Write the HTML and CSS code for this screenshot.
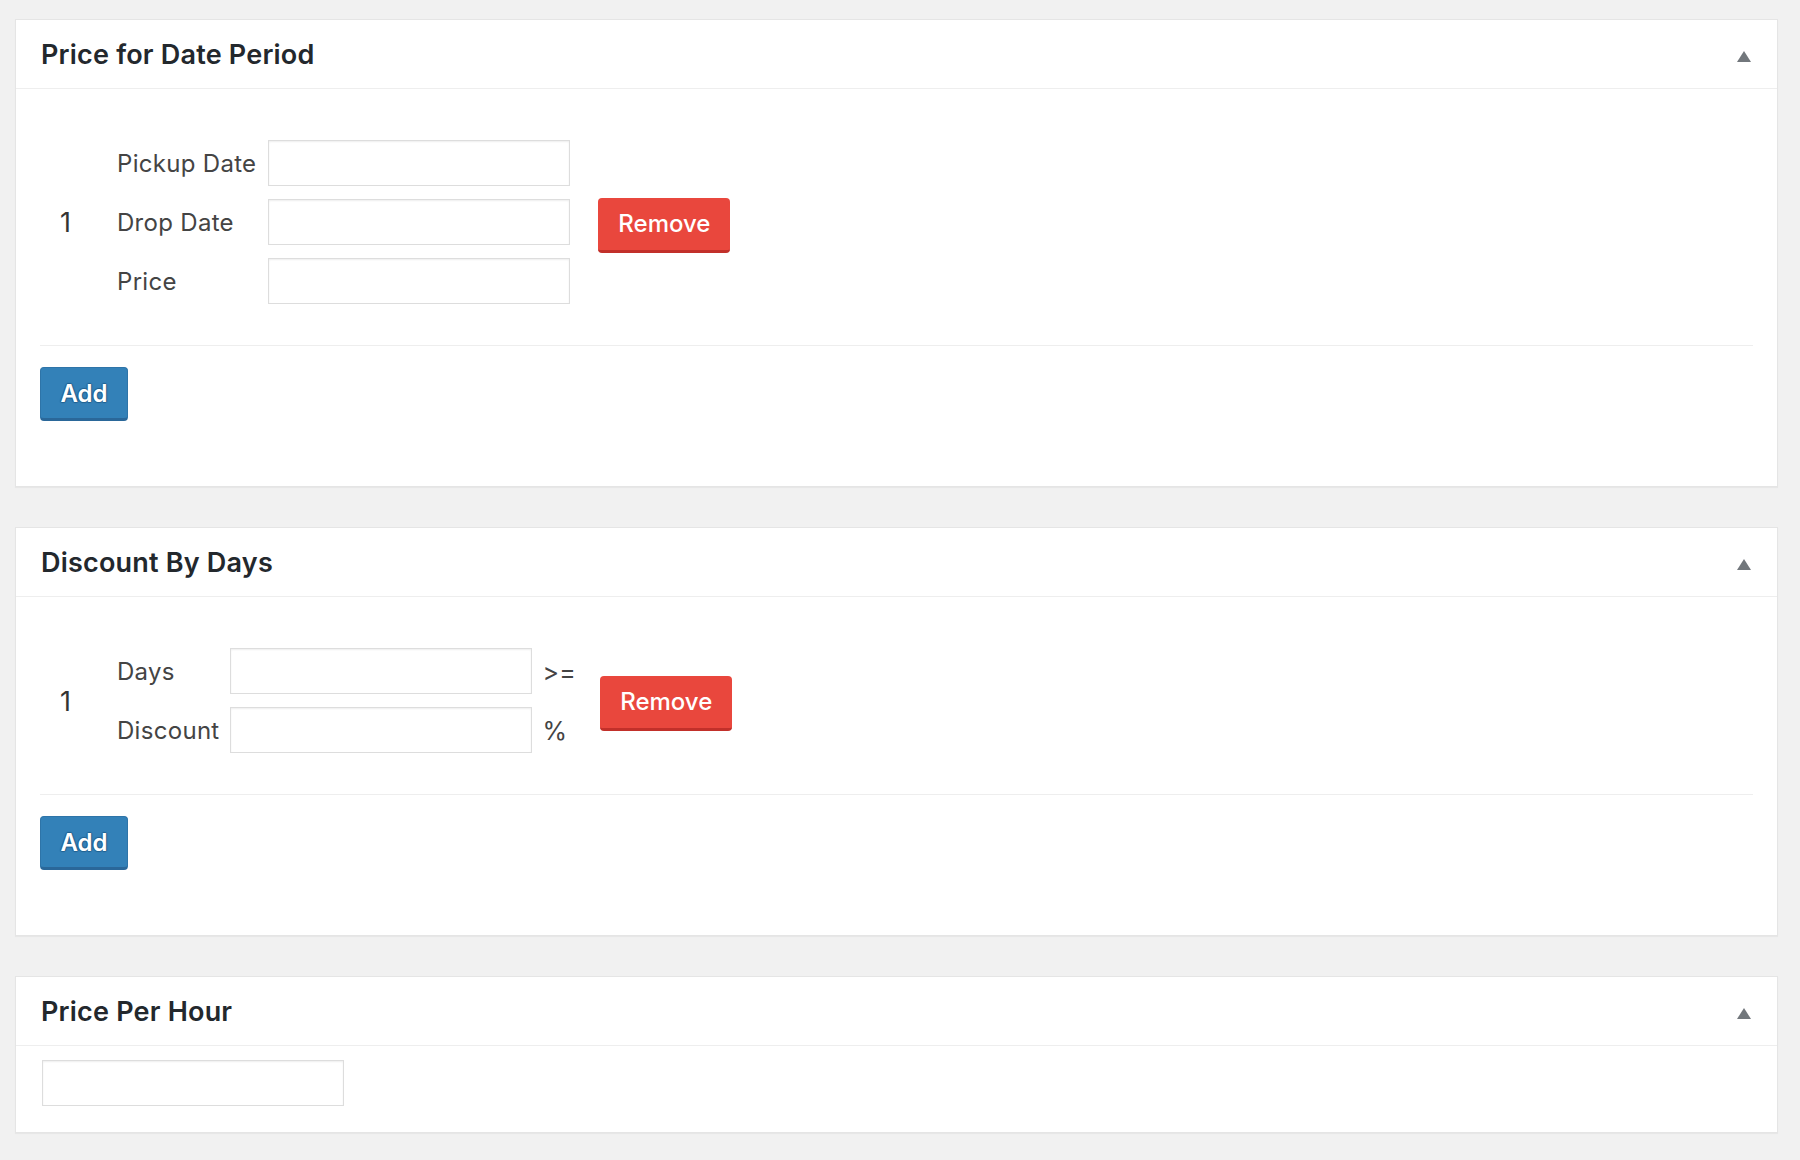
FILE: index.html
```html
<!DOCTYPE html>
<html>
<head>
    <link rel="stylesheet" href="styles.css">
</head>
<body>
    <div class="postbox">
        <div class="postbox-header">
            <h2>Price for Date Period</h2>
            <span class="toggle-arrow"></span>
        </div>
        <div class="inside">
            <table class="repeat-table">
                <tr>
                    <td class="row-num" rowspan="3">1</td>
                    <td class="row-label">Pickup Date</td>
                    <td class="row-input"><input type="text"></td>
                    <td class="row-action" rowspan="3"><button class="btn btn-remove">Remove</button></td>
                </tr>
                <tr>
                    <td class="row-label">Drop Date</td>
                    <td class="row-input"><input type="text"></td>
                </tr>
                <tr>
                    <td class="row-label">Price</td>
                    <td class="row-input"><input type="text"></td>
                </tr>
            </table>
            <div class="separator"></div>
            <button class="btn btn-add">Add</button>
        </div>
    </div>

    <div class="postbox">
        <div class="postbox-header">
            <h2>Discount By Days</h2>
            <span class="toggle-arrow"></span>
        </div>
        <div class="inside">
            <table class="repeat-table">
                <tr>
                    <td class="row-num" rowspan="2">1</td>
                    <td class="row-label tight">Days</td>
                    <td class="row-input"><input type="text"></td>
                    <td class="row-unit">&gt;=</td>
                    <td class="row-action narrow" rowspan="2"><button class="btn btn-remove">Remove</button></td>
                </tr>
                <tr>
                    <td class="row-label tight">Discount</td>
                    <td class="row-input"><input type="text"></td>
                    <td class="row-unit">%</td>
                </tr>
            </table>
            <div class="separator"></div>
            <button class="btn btn-add">Add</button>
        </div>
    </div>

    <div class="postbox">
        <div class="postbox-header">
            <h2>Price Per Hour</h2>
            <span class="toggle-arrow"></span>
        </div>
        <div class="inside inside-simple">
            <input type="text">
        </div>
    </div>
</body>
</html>
```

FILE: styles.css
```css
body {
    font-family: Inter, Roboto, "Liberation Sans", Arial, sans-serif;
    background-color: #f1f1f1;
    margin: 0;
    padding: 19px 22px 0 15px;
    color: #444;
}
.postbox {
    background-color: white;
    border: 1px solid #e5e5e5;
    box-shadow: 0 1px 1px rgba(0,0,0,0.04);
    margin-bottom: 40px;
}
.postbox-header {
    display: flex;
    align-items: center;
    justify-content: space-between;
    height: 68px;
    padding: 0 26px 0 25px;
    border-bottom: 1px solid #eee;
}
.postbox-header h2 {
    margin: 0;
    font-size: 27px;
    font-weight: 600;
    letter-spacing: 0.2px;
    color: #23282d;
}
.toggle-arrow {
    width: 0;
    height: 0;
    margin-top: 5px;
    border-left: 7.5px solid transparent;
    border-right: 7.5px solid transparent;
    border-bottom: 11px solid #72777c;
}
.inside {
    padding: 45px 24px 65px 24px;
}
.inside-simple {
    padding: 14px 26px 26px 26px;
}
.repeat-table {
    border-collapse: collapse;
}
.repeat-table td {
    padding: 0;
    vertical-align: middle;
    font-size: 24px;
    letter-spacing: 0.3px;
}
.row-num {
    width: 57px;
    padding-left: 20px !important;
    font-size: 27px !important;
    color: #333;
}
.row-label {
    padding-right: 12px !important;
    white-space: nowrap;
}
.row-label.tight {
    padding-right: 10px !important;
}
.row-input {
    padding: 6px 0 7px 0 !important;
}
.row-unit {
    padding-left: 11px !important;
    font-size: 25px !important;
}
.row-action {
    padding: 5px 0 0 28px !important;
}
.row-action.narrow {
    padding: 4px 0 0 24px !important;
}
input[type="text"] {
    display: block;
    width: 302px;
    height: 46px;
    box-sizing: border-box;
    margin: 0;
    border: 1px solid #ddd;
    box-shadow: inset 0 1px 2px rgba(0,0,0,0.07);
    background-color: white;
}
.separator {
    border-top: 1px solid #eee;
    margin-top: 34px;
    margin-bottom: 21px;
}
.btn {
    display: block;
    border: none;
    border-radius: 4px;
    color: white;
    font-family: Inter, Roboto, "Liberation Sans", Arial, sans-serif;
    font-weight: 500;
    font-size: 24px;
    cursor: pointer;
}
.btn-remove {
    width: 132px;
    height: 55px;
    background-color: #e9473d;
    border-bottom: 3px solid #c2302a;
}
.btn-add {
    width: 88px;
    height: 54px;
    font-weight: 600;
    background-color: #3381b8;
    border: 1px solid #2e74a8;
    border-bottom: 3px solid #2a6799;
    text-shadow: 0 -1px 1px #22608f, 1px 0 1px #22608f, 0 1px 1px #22608f, -1px 0 1px #22608f;
}
```
